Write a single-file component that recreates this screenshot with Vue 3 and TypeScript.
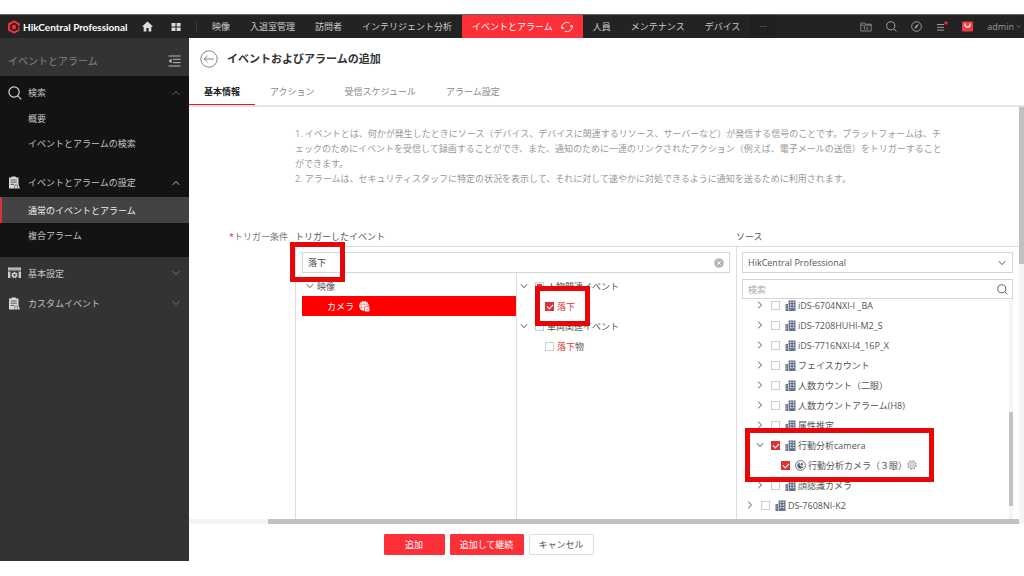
<script setup lang="ts">
import { ref } from 'vue'

interface SourceNode {
  name: string
  depth: number
}

const navBefore = ['映像', '入退室管理', '訪問者', 'インテリジェント分析']
const navAfter = ['人員', 'メンテナンス', 'デバイス']
const tabs = ['基本情報', 'アクション', '受信スケジュール', 'アラーム設定']
const activeTab = ref('基本情報')

const keyword = ref('落下')
const site = ref('HikCentral Professional')
const sourceKeyword = ref('')

const sourcesBefore: SourceNode[] = [
  { name: 'iDS-6704NXI-I _BA', depth: 1 },
  { name: 'iDS-7208HUHI-M2_S', depth: 1 },
  { name: 'iDS-7716NXI-I4_16P_X', depth: 1 },
  { name: 'フェイスカウント', depth: 1 },
  { name: '人数カウント（二眼）', depth: 1 },
  { name: '人数カウントアラーム(H8)', depth: 1 },
  { name: '属性推定', depth: 1 },
]
const sourcesAfter: SourceNode[] = [
  { name: '顔認識カメラ', depth: 1 },
  { name: 'DS-7608NI-K2', depth: 0 },
]
</script>

<template>
  <svg class="defs" aria-hidden="true">
    <symbol id="chev" viewBox="0 0 8 8"><path d="M0.8 2.2 4 5.6 7.2 2.2" fill="none" stroke="currentColor" /></symbol>
    <symbol id="mag" viewBox="0 0 12 12">
      <circle cx="5.2" cy="5.2" r="4.4" fill="none" stroke="currentColor" />
      <path d="M8.4 8.4 11.4 11.4" stroke="currentColor" />
    </symbol>
    <symbol id="building" viewBox="0 0 11 11">
      <path d="M0.5 4h2.5v7H0.5z M3.6 0.5H10.5V11H3.6z" fill="#66738b" />
      <path d="M5 2.4h1.4M7.8 2.4h1.4M5 5h1.4M7.8 5h1.4M5 7.6h1.4M7.8 7.6h1.4" stroke="#e9edf4" stroke-width="1.4" />
      <path d="M1.2 6h1.2M1.2 8.4h1.2" stroke="#c5ccd9" stroke-width="0.7" />
    </symbol>
    <symbol id="clip" viewBox="0 0 12 13">
      <path d="M1 1.5h2.6V0.4h4.2v1.1h2.7v7L12 12.6H1z" fill="currentColor" />
      <path d="M2.6 4h6.2M2.6 6.2h6.2M2.6 8.4h3.4" stroke="#222" stroke-width="0.7" />
      <path d="M6.6 12.4V10.2a1.5 1.5 0 0 1 3 0v2.2" fill="none" stroke="#222" stroke-width="0.5" />
    </symbol>
  </svg>

  <div class="page">
    <header class="topbar">
      <div class="brand">
        <svg class="logo" viewBox="0 0 14 14">
          <path d="M7 0.2 13 3.6v2.2l-2.1 0.4V4.9L7 2.6 3.1 4.9v4.3L7 11.4l3.9-2.2 2.1 0.9v0.4L7 13.8 1 10.4V3.6z" fill="#f0313c" />
          <circle cx="7" cy="7" r="2.2" fill="#f0313c" />
          <circle cx="12" cy="8" r="0.9" fill="#f0313c" />
        </svg>
        <span>HikCentral Professional</span>
      </div>
      <button class="icon-btn home" aria-label="ホーム">
        <svg width="11" height="11" viewBox="0 0 11 11"><path d="M5.5 0.6 0.3 5.2l0.8 0.9 0.6-0.5V10.4H4.4V7h2.2v3.4h2.7V5.6l0.6 0.5 0.8-0.9z" fill="#ddd" /></svg>
      </button>
      <button class="icon-btn apps" aria-label="アプリ">
        <svg width="10" height="10" viewBox="0 0 10 10"><path d="M0.5 1h4v3.4h-4zM5.6 1h4v3.4h-4zM0.5 5.6h4V9h-4zM5.6 5.6h4V9h-4z" fill="#ddd" /></svg>
      </button>
      <nav class="nav">
        <a v-for="n in navBefore" :key="n" href="#">{{ n }}</a>
        <a href="#" class="current">
          イベントとアラーム
          <svg width="12" height="12" viewBox="0 0 12 12" fill="none" stroke="#fff" stroke-width="0.9">
            <path d="M1.2 7.6A5 4.6 0 0 1 8.4 2M10.8 4.4A5 4.6 0 0 1 3.6 10" />
            <path d="M0 5.6 1.2 7.8 3.2 6.6M12 6.4 10.8 4.2 8.8 5.4" />
          </svg>
        </a>
        <a v-for="n in navAfter" :key="n" href="#">{{ n }}</a>
        <button class="more" aria-label="その他">···</button>
      </nav>
      <div class="tools">
        <button class="icon-btn" aria-label="ファイル">
          <svg width="12" height="12" viewBox="0 0 12 12" fill="none" stroke="#999" stroke-width="0.8"><path d="M0.8 10V2h3.6l1 1.2h5.8V10zM0.8 4.2h10.4M4.6 5.6v3M4.6 5.6l-1 1M7 8.6v-3M7 8.6l1-1" /></svg>
        </button>
        <button class="icon-btn" aria-label="検索"><svg width="11" height="11" class="grey"><use href="#mag" /></svg></button>
        <button class="icon-btn" aria-label="ガイド">
          <svg width="11" height="11" viewBox="0 0 11 11"><circle cx="5.5" cy="5.5" r="4.8" fill="none" stroke="#aaa" stroke-width="0.9" /><path d="M7.8 2.8 6.3 6.3 3.2 8.2 4.7 4.7z" fill="#aaa" /></svg>
        </button>
        <button class="icon-btn" aria-label="タスク">
          <svg width="12" height="12" viewBox="0 0 12 12"><path d="M1 3.5h7M1 6.3h7M1 9.1h7" stroke="#aaa" stroke-width="0.9" /><circle cx="10" cy="2" r="1.7" fill="#f22a35" /></svg>
        </button>
        <button class="icon-btn" aria-label="ストア">
          <svg width="11" height="11" viewBox="0 0 11 11"><rect y="0.5" width="11" height="10" rx="1" fill="#f33b45" /><path d="M3 2.6v1.2a2.5 2.4 0 0 0 5 0V2.6" fill="none" stroke="#fff" stroke-width="1.2" /></svg>
        </button>
        <button class="user">admin <svg width="5" height="5"><use href="#chev" /></svg></button>
      </div>
    </header>

    <div class="body">
      <aside class="sidebar">
        <div class="side-title">
          <span>イベントとアラーム</span>
          <button class="icon-btn" aria-label="折りたたむ">
            <svg width="13" height="12" viewBox="0 0 13 12"><path d="M0.5 1h12M5 4.3h7.5M5 7.6h7.5M0.5 11h12" stroke="#bbb" /><path d="M3.6 3.6v4.6L0.6 5.9z" fill="#bbb" /></svg>
          </button>
        </div>
        <div class="side-dark">
          <button class="group first">
            <svg width="14" height="14" class="light"><use href="#mag" /></svg><span>検索</span><svg class="up dim" width="8" height="8"><use href="#chev" /></svg>
          </button>
          <a class="item" href="#">概要</a>
          <a class="item" href="#">イベントとアラームの検索</a>
          <button class="group second">
            <svg width="12" height="13" class="light"><use href="#clip" /></svg><span>イベントとアラームの設定</span><svg class="up" width="8" height="8"><use href="#chev" /></svg>
          </button>
          <a class="item active" href="#">通常のイベントとアラーム</a>
          <a class="item" href="#">複合アラーム</a>
        </div>
        <div class="side-rest">
          <button class="group">
            <svg width="13" height="12" viewBox="0 0 13 12"><path d="M0 0.6h13v3H0z M0 4.4h2.4V11H0z M10.6 4.4H13V11h-2.4z" fill="#ccc" /><path d="M6.5 4.2 7.5 5.8l2 0.1-0.6 1.6 1 1.6-1.4 0.6-0.4 1.7-1.6-1.2-1.6 1.2-0.4-1.7-1.4-0.6 1-1.6-0.6-1.6 2-0.1z" fill="#ccc" /><circle cx="6.5" cy="8" r="1.1" fill="#333" /><path d="M1 2.2h11" stroke="#777" stroke-width="0.6" /></svg>
            <span>基本設定</span><svg class="dim" width="8" height="8"><use href="#chev" /></svg>
          </button>
          <button class="group">
            <svg width="12" height="13" class="light"><use href="#clip" /></svg><span>カスタムイベント</span><svg class="dim" width="8" height="8"><use href="#chev" /></svg>
          </button>
        </div>
      </aside>

      <main class="main">
        <div class="heading">
          <button class="icon-btn" aria-label="戻る">
            <svg width="18" height="18" viewBox="0 0 18 18" fill="none" stroke="#777" stroke-width="0.9"><circle cx="9" cy="9" r="8.2" /><path d="M4.2 9h9.6M7.6 5.6 4.2 9l3.4 3.4" /></svg>
          </button>
          <h1>イベントおよびアラームの追加</h1>
        </div>
        <div class="tabs" role="tablist">
          <button v-for="t in tabs" :key="t" role="tab" :aria-selected="t === activeTab" :class="{ on: t === activeTab }" @click="activeTab = t">{{ t }}</button>
        </div>

        <div class="scroller">
          <div class="content">
            <div class="notes">
              <p>1. イベントとは、何かが発生したときにソース（デバイス、デバイスに関連するリソース、サーバーなど）が発信する信号のことです。プラットフォームは、チ<br>ェックのためにイベントを受信して録画することができ、また、通知のために一連のリンクされたアクション（例えば、電子メールの送信）をトリガーすること<br>ができます。</p>
              <p>2. アラームは、セキュリティスタッフに特定の状況を表示して、それに対して速やかに対処できるように通知を送るために利用されます。</p>
            </div>
            <div class="field">
              <div class="label"><i>*</i>トリガー条件</div>
              <div class="columns">
                <div class="col-title">トリガーしたイベント</div>
                <div class="col-title">ソース</div>
                <section class="events">
                  <div class="event-search">
                    <input v-model="keyword" aria-label="イベント検索">
                    <button class="icon-btn" aria-label="クリア" @click="keyword = ''">
                      <svg width="10" height="10" viewBox="0 0 10 10"><circle cx="5" cy="5" r="4.8" fill="#b5b5b5" /><path d="M3.2 3.2 6.8 6.8M6.8 3.2 3.2 6.8" stroke="#fff" stroke-width="0.9" /></svg>
                    </button>
                    <div class="mark mark-search"></div>
                  </div>
                  <div class="event-cols">
                    <div class="categories">
                      <div class="row cat"><svg width="8" height="8"><use href="#chev" /></svg><span>映像</span></div>
                      <button class="row cam">カメラ
                        <svg width="11" height="11" viewBox="0 0 11 11"><circle cx="5" cy="5" r="4.8" fill="#fff" /><path d="M0.5 3.4h9M0.5 6.6h5M5 0.2v5.4M2.4 1.2v7M7.6 1.2v4" stroke="#f66" stroke-width="0.5" /><rect x="5.6" y="5.6" width="5.2" height="5.2" rx="1" fill="#fff" stroke="#f00" stroke-width="0.6" /><path d="M7 8.2 8 9.2 9.6 7.2" fill="none" stroke="#f44" stroke-width="0.6" /></svg>
                      </button>
                    </div>
                    <div class="types">
                      <div class="row">
                        <svg width="8" height="8"><use href="#chev" /></svg>
                        <label><input type="checkbox" class="partial">人物関連イベント</label>
                      </div>
                      <div class="row sub">
                        <label><input type="checkbox" checked><em>落下</em></label>
                        <div class="mark mark-type"></div>
                      </div>
                      <div class="row">
                        <svg width="8" height="8"><use href="#chev" /></svg>
                        <label><input type="checkbox">車両関連イベント</label>
                      </div>
                      <div class="row sub">
                        <label><input type="checkbox"><span><em>落下</em>物</span></label>
                      </div>
                    </div>
                  </div>
                </section>
                <section class="sources">
                  <div class="box">
                    <select v-model="site" aria-label="サイト"><option>HikCentral Professional</option></select>
                    <svg width="8" height="8"><use href="#chev" /></svg>
                  </div>
                  <div class="box find">
                    <input v-model="sourceKeyword" placeholder="検索" aria-label="ソース検索">
                    <svg width="11" height="11"><use href="#mag" /></svg>
                  </div>
                  <div class="tree">
                    <div class="tree-rows">
                      <div v-for="s in sourcesBefore" :key="s.name" class="row node">
                        <svg class="shut" width="8" height="8"><use href="#chev" /></svg>
                        <label><input type="checkbox"><svg width="11" height="11"><use href="#building" /></svg>{{ s.name }}</label>
                      </div>
                      <div class="marked">
                        <div class="row node">
                          <svg width="8" height="8"><use href="#chev" /></svg>
                          <label><input type="checkbox" checked><svg width="11" height="11"><use href="#building" /></svg>行動分析camera</label>
                        </div>
                        <div class="row node leaf">
                          <label><input type="checkbox" checked>
                            <svg width="11" height="11" viewBox="0 0 11 11"><circle cx="5.5" cy="5.5" r="4.9" fill="none" stroke="#4f5b73" stroke-width="0.9" /><path d="M4.6 2.4a3.2 3.2 0 1 0 4 3.9L6.4 6.8 4.8 5.4z" fill="#4f5b73" /><circle cx="6.8" cy="4.2" r="1.2" fill="#4f5b73" /></svg>
                            行動分析カメラ（３眼）</label>
                          <button class="icon-btn" aria-label="設定">
                            <svg width="10" height="10" viewBox="0 0 10 10" fill="none" stroke="#888"><circle cx="5" cy="5" r="4.2" stroke-dasharray="1.9 1.4" stroke-width="1" /><circle cx="5" cy="5" r="3.4" stroke-width="0.7" /><circle cx="5" cy="5" r="1.5" stroke-width="0.7" /></svg>
                          </button>
                        </div>
                        <div class="mark mark-source"></div>
                      </div>
                      <div v-for="s in sourcesAfter" :key="s.name" class="row node" :class="{ root: s.depth === 0 }">
                        <svg class="shut" width="8" height="8"><use href="#chev" /></svg>
                        <label><input type="checkbox"><svg width="11" height="11"><use href="#building" /></svg>{{ s.name }}</label>
                      </div>
                    </div>
                    <div class="tree-bar"><div></div></div>
                  </div>
                </section>
              </div>
            </div>
          </div>
          <div class="vbar"><div></div></div>
          <div class="hbar"><div></div></div>
        </div>

        <footer class="actions">
          <button class="primary">追加</button>
          <button class="primary wide">追加して継続</button>
          <button class="plain">キャンセル</button>
        </footer>
      </main>
    </div>
  </div>
</template>

<style>
body { margin: 0; background: #fff; }
</style>

<style scoped>
* { box-sizing: border-box; }
.defs { position: absolute; width: 0; height: 0; }
svg { flex: none; }
button, input, select { font: inherit; color: inherit; margin: 0; padding: 0; border: 0; background: none; border-radius: 0; outline: 0; }
button { cursor: pointer; }
a { color: inherit; text-decoration: none; }
.icon-btn { display: flex; align-items: center; justify-content: center; }
.page {
  display: flex; flex-direction: column; height: 100vh; padding: 14px 0 15px;
  font: 9px/15px "Open Sans", "Noto Sans CJK JP", sans-serif; color: #555;
}

.topbar { display: flex; align-items: center; flex: none; height: 24px; background: #232323; border-top: 1px solid #666; color: #ccc; }
.brand { display: flex; align-items: center; gap: 2px; width: 134px; padding-left: 7px; font: bold 10px/14px Lato, sans-serif; color: #fff; white-space: nowrap; }
.logo { width: 14px; height: 14px; }
.home { margin-left: 8px; }
.apps { margin-left: 18px; padding-right: 15px; border-right: 1px solid #3a3a3a; }
.nav { display: flex; align-self: stretch; margin-left: 5px; white-space: nowrap; }
.nav a { display: flex; align-items: center; gap: 8px; padding: 0 10px; }
.nav .current { background: #fb3038; color: #fff; }
.more { width: 26px; color: #888; background: #1f211e; }
.tools { display: flex; align-items: center; gap: 14px; margin-left: auto; padding-right: 3px; color: #999; }
.user { display: flex; align-items: center; gap: 2px; }
.grey { color: #aaa; }

.body { display: flex; flex: 1; min-height: 0; }
.sidebar { flex: none; width: 189px; background: #333; color: #c4c4c4; }
.side-title { display: flex; align-items: center; justify-content: space-between; height: 38px; padding: 8px 8px 0; font-size: 10px; color: #848484; }
.side-dark { height: 181px; padding-top: 4px; background: #131313; }
.group { display: flex; align-items: center; justify-content: space-between; width: 100%; height: 25px; padding: 0 9px 0 8px; text-align: left; }
.group span { width: 144px; margin-left: auto; }
.first { margin-bottom: 1px; }
.second { margin-top: 14px; }
.light { color: #d8d8d8; }
.dim { opacity: 0.5; }
.up { transform: rotate(180deg); }
.item { display: flex; align-items: center; height: 25px; padding-left: 28px; }
.item.active { height: 26px; margin-top: 2px; padding-left: 26px; background: #434343; border-left: 2px solid #d9303a; color: #eee; }
.side-rest { padding-top: 1px; }
.side-rest .group { height: 30px; }

.main { display: flex; flex-direction: column; flex: 1; min-width: 0; background: #fff; }
.heading { display: flex; align-items: center; flex: none; gap: 9px; height: 41px; padding-left: 11px; }
h1 { margin: 0; font-size: 11px; font-weight: 600; color: #333; }
.tabs { display: flex; flex: none; height: 28px; border-bottom: 2px solid #e6e6e6; }
.tabs button { height: 26px; padding: 0 15px 1px; color: #888; }
.tabs .on { padding-bottom: 0; border-bottom: 1px solid #e02020; color: #222; font-weight: bold; }

.scroller {
  display: grid; grid-template: minmax(0, 1fr) 5px / minmax(0, 1fr) 5px;
  flex: 1; min-height: 0;
}
.content { display: flex; flex-direction: column; overflow: hidden; }
.vbar { background: #f5f5f5; }
.vbar div { height: 38%; background: #c1c1c1; }
.hbar { grid-column: 1 / 3; padding: 0 5px 0 79px; background: #f3f3f3; }
.hbar div { height: 5px; background: #c1c1c1; }

.notes { padding: 19px 0 0 106px; color: #999; white-space: nowrap; }
.notes p { margin: 0; }
.field { display: flex; flex: 1; min-height: 0; padding-top: 43px; }
.label { width: 99px; margin-right: 7px; text-align: right; color: #777; }
.label i { font-style: normal; color: #d33; }
.columns { display: grid; grid-template: 17px minmax(0, 1fr) / 441fr 283fr; flex: 1; min-width: 0; }
.events, .sources { display: flex; flex-direction: column; min-width: 0; border-top: 1px solid #ddd; border-left: 1px solid #ddd; }
.event-search { position: relative; display: flex; align-items: center; flex: none; height: 21px; margin: 5px 6px 0; padding-right: 5px; border: 1px solid #d5d5d5; }
.event-search input { flex: 1; min-width: 0; padding-left: 5px; color: #444; }
.event-cols { display: grid; grid-template-columns: 1fr 1fr; flex: 1; }
.categories, .types { padding-top: 3px; }
.types { border-left: 1px solid #ddd; }
.row { position: relative; display: flex; align-items: center; height: 20px; white-space: nowrap; }
.row label { display: flex; align-items: center; gap: 3px; }
.cat { gap: 3px; padding-left: 10px; }
.cam { gap: 5px; width: calc(100% - 6px); margin-left: 6px; padding-left: 25px; background: #f00; color: #fff; }
.types .row { gap: 7px; padding-left: 3px; }
.types .sub { padding-left: 28px; }
em { font-style: normal; color: #e0333c; }

input[type="checkbox"] { appearance: none; flex: none; width: 9px; height: 9px; border: 1px solid #ccc; background: #fff; }
input[type="checkbox"]:checked { position: relative; border-color: #e0303a; background: #e0303a; }
input[type="checkbox"]:checked::after {
  content: ""; position: absolute; left: 1px; top: 1px; width: 5px; height: 3px;
  border: solid #fff; border-width: 0 0 1px 1px; transform: rotate(-45deg);
}
input[type="checkbox"].partial { padding: 1px; background: #e0303a content-box; }

.sources { gap: 6px; padding: 5px 0 0 5px; }
.box { display: flex; align-items: center; position: relative; flex: none; height: 21px; margin-right: 6px; padding-right: 6px; border: 1px solid #d5d5d5; }
.find { height: 20px; padding-right: 4px; }
.box select, .box input { appearance: none; flex: 1; min-width: 0; padding-left: 5px; }
.box input::placeholder { color: #aaa; opacity: 1; }
.tree { display: flex; flex: 1; min-height: 0; margin-top: -6px; overflow: hidden; }
.tree-rows { flex: 1; min-width: 0; margin-top: -4px; clip-path: inset(4px 0 0); }
.node { padding-left: 14px; gap: 7px; }
.node label { gap: 2px; }
.node input { margin-right: 3px; }
.node.root { padding-left: 4px; }
.node.leaf { gap: 0; padding-left: 39px; }
.shut { transform: rotate(-90deg); }
.tree-bar { width: 4px; margin-right: 6px; background: #f5f5f5; padding-top: 113px; }
.tree-bar div { height: 94px; background: #c1c1c1; }
.marked { position: relative; }

.mark { position: absolute; z-index: 2; border: 5px solid #e60808; pointer-events: none; }
.mark-search { left: -13px; top: -11px; width: 55px; height: 40px; }
.mark-type { left: 18px; top: -10px; width: 55px; height: 40px; }
.mark-source { left: 3px; top: -7px; width: 189px; height: 54px; }

.actions { display: flex; align-items: center; justify-content: center; gap: 5px; flex: none; height: 37px; padding: 3px 236px 0 0; }
.actions button { width: 65px; height: 21px; border: 1px solid #ddd; border-radius: 1px; }
.actions .primary { width: 61px; border-color: #fb3038; background: #fb3038; color: #fff; }
.actions .wide { width: 74px; }
</style>
